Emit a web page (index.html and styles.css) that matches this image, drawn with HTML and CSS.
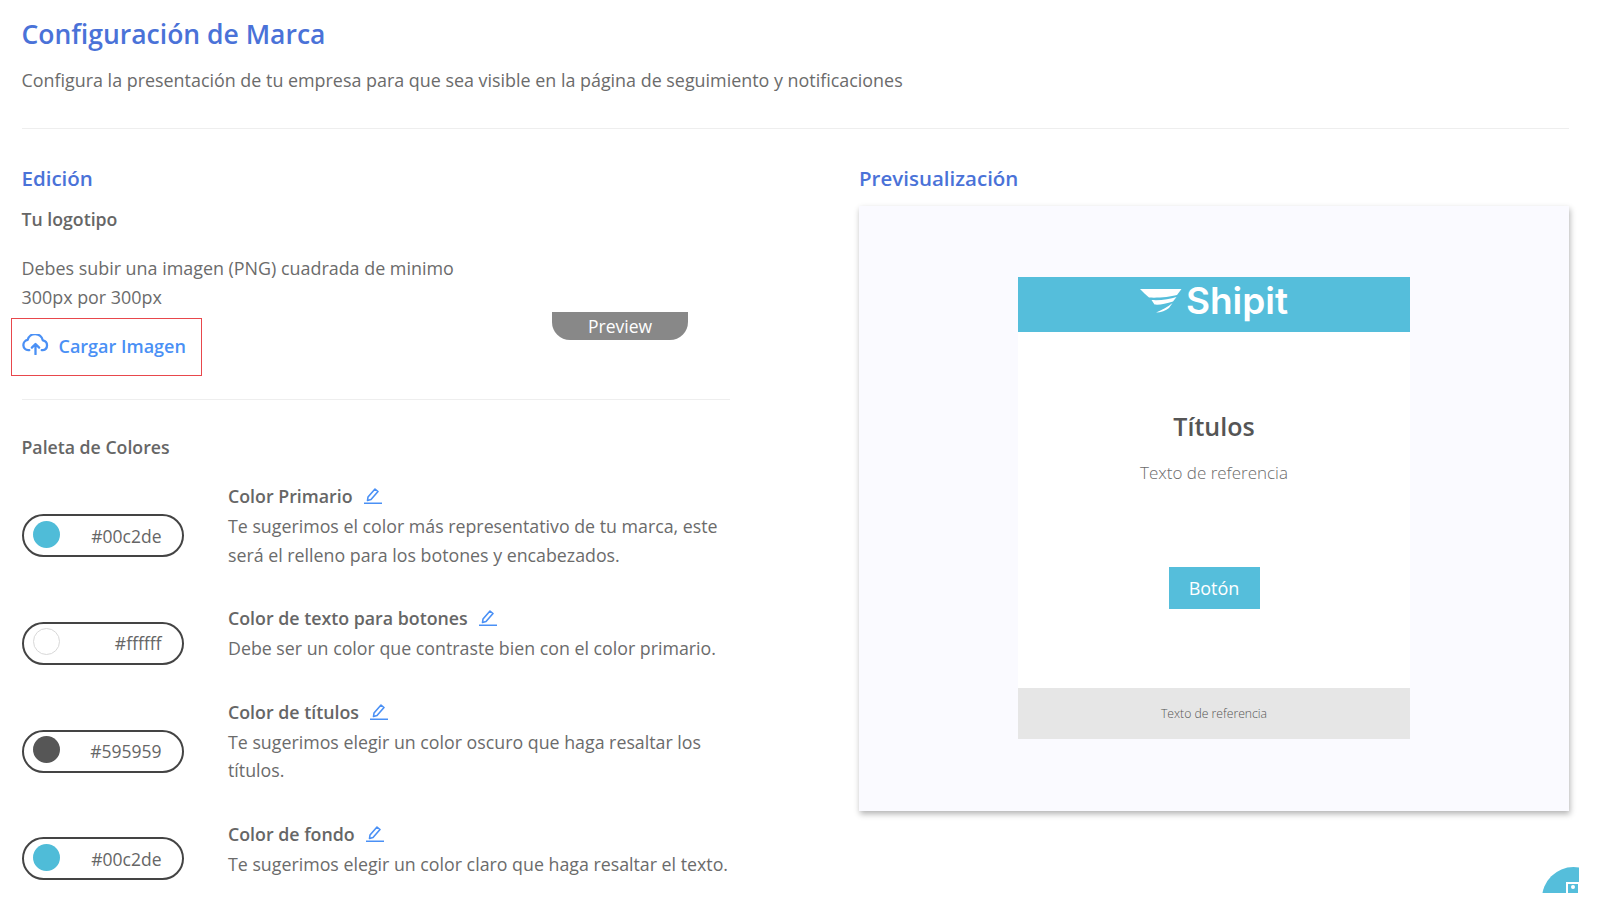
FILE: index.html
```html
<!DOCTYPE html>
<html lang="es">
<head>
<meta charset="utf-8">
<title>Configuración de Marca</title>
<link rel="stylesheet" href="styles.css">
</head>
<body>
<main class="page">
  <header class="page-head">
    <h1 class="page-title">Configuración de Marca</h1>
    <p class="page-sub">Configura la presentación de tu empresa para que sea visible en la página de seguimiento y notificaciones</p>
  </header>
  <div class="columns">
    <section class="edit">
      <h2 class="section-title">Edición</h2>
      <h3 class="sub-title logo-title">Tu logotipo</h3>
      <p class="logo-text">Debes subir una imagen (PNG) cuadrada de minimo<br>300px por 300px</p>
      <div class="upload-row">
        <div class="upload-box">
          <svg class="cloud" viewBox="0 0 26 20" fill="none" stroke="currentColor" stroke-width="2.2" stroke-linecap="round" stroke-linejoin="round"><path d="M7 15.500H6a5 5 0 0 1-.6-9.900A7.500 7.500 0 0 1 20 6a4.800 4.800 0 0 1 0 9.500h-1"/><path d="M13 19.500V10M9.500 13 13 9.500l3.500 3.500"/></svg>
          <span>Cargar Imagen</span>
        </div>
        <div class="preview-tab">Preview</div>
      </div>
      <div class="palette">
        <h3 class="sub-title palette-title">Paleta de Colores</h3>
        <div class="color-row">
          <div class="pill"><span class="dot dot-blue"></span><span>#00c2de</span></div>
          <div class="color-info">
            <h4 class="color-name">Color Primario<svg class="pencil" viewBox="0 0 18 16" fill="none" stroke="currentColor" stroke-width="1.600" stroke-linejoin="round"><path d="M3.500 12.500 4 9l7-8 3 2.500-7 8z"/><path d="M0 15.300h18"/></svg></h4>
            <p class="color-desc">Te sugerimos el color más representativo de tu marca, este será el relleno para los botones y encabezados.</p>
          </div>
        </div>
        <div class="color-row">
          <div class="pill"><span class="dot dot-white"></span><span>#ffffff</span></div>
          <div class="color-info">
            <h4 class="color-name">Color de texto para botones<svg class="pencil" viewBox="0 0 18 16" fill="none" stroke="currentColor" stroke-width="1.600" stroke-linejoin="round"><path d="M3.500 12.500 4 9l7-8 3 2.500-7 8z"/><path d="M0 15.300h18"/></svg></h4>
            <p class="color-desc">Debe ser un color que contraste bien con el color primario.</p>
          </div>
        </div>
        <div class="color-row">
          <div class="pill"><span class="dot dot-dark"></span><span>#595959</span></div>
          <div class="color-info">
            <h4 class="color-name">Color de títulos<svg class="pencil" viewBox="0 0 18 16" fill="none" stroke="currentColor" stroke-width="1.600" stroke-linejoin="round"><path d="M3.500 12.500 4 9l7-8 3 2.500-7 8z"/><path d="M0 15.300h18"/></svg></h4>
            <p class="color-desc">Te sugerimos elegir un color oscuro que haga resaltar los títulos.</p>
          </div>
        </div>
        <div class="color-row">
          <div class="pill"><span class="dot dot-blue"></span><span>#00c2de</span></div>
          <div class="color-info">
            <h4 class="color-name">Color de fondo<svg class="pencil" viewBox="0 0 18 16" fill="none" stroke="currentColor" stroke-width="1.600" stroke-linejoin="round"><path d="M3.500 12.500 4 9l7-8 3 2.500-7 8z"/><path d="M0 15.300h18"/></svg></h4>
            <p class="color-desc">Te sugerimos elegir un color claro que haga resaltar el texto.</p>
          </div>
        </div>
      </div>
    </section>
    <section class="preview">
      <h2 class="section-title preview-heading">Previsualización</h2>
      <div class="preview-card">
        <div class="mail">
          <div class="mail-head">
            <svg class="wing" viewBox="0 0 42 25" fill="#fff"><path d="M0 0H41.500L37 6C30 8 18 9 9 8.500C6 6 3 3 0 0Z"/><path d="M11.500 11C20 11.500 30 10.500 36.500 8L33 12.500C26 15 19 16 14.500 15.500Z"/><path d="M16 23.500C22 21 28 18 32.500 14L29 19C26 21.500 21 23.500 16 23.500Z"/></svg>
            <span class="brand">Shipit</span>
          </div>
          <div class="mail-body">
            <div class="mail-title">Títulos</div>
            <div class="mail-text">Texto de referencia</div>
            <div class="mail-button">Botón</div>
          </div>
          <div class="mail-foot">Texto de referencia</div>
        </div>
      </div>
    </section>
  </div>
</main>
<div class="chat-clip">
  <div class="chat-bubble"><span class="chat-icon"><span class="chat-dot"></span></span></div>
</div>
</body>
</html>
```
FILE: styles.css
```css
* { box-sizing: border-box; }
html, body { margin: 0; height: 100%; background: #fff; overflow: hidden; }
body { font-family: "Open Sans", "Noto Sans", "Liberation Sans", sans-serif; color: #666; }
h1, h2, h3, h4, p { margin: 0; }

.page { padding: 16px 31px 0 21.500px; }
.page-head { height: 113px; border-bottom: 1px solid #eeeeee; }
.page-title { font-size: 26.500px; line-height: 36px; font-weight: 600; color: #4a72d8; }
.page-sub { margin-top: 14px; font-size: 17.900px; line-height: 28px; color: #6b6b6b; }

.columns { display: grid; grid-template-columns: 708.500px 710px; column-gap: 129px; padding-top: 35px; }

.section-title { font-size: 20.500px; line-height: 28px; font-weight: 600; color: #4a72d8; }
.sub-title { font-size: 17.700px; line-height: 28px; font-weight: 600; color: #666; }
.logo-title { margin-top: 13px; }
.logo-text { margin-top: 21px; font-size: 17.900px; line-height: 29px; color: #6b6b6b; }

.upload-row { display: flex; align-items: flex-start; height: 89px; border-bottom: 1px solid #eeeeee; margin-top: -1px; }
.upload-box { display: flex; align-items: center; gap: 10px; width: 191px; height: 58px; margin: 7px 0 0 -11px; padding: 0 0 2px 10px; border: 1.500px solid #e8474c; color: #4a90f5; font-size: 18px; font-weight: 600; }
.cloud { width: 27px; height: 21px; flex: none; margin-top: -3px; }
.preview-tab { width: 136px; height: 28px; margin: 1px 0 0 350.500px; background: #888; color: #fff; font-size: 17.500px; line-height: 28px; text-align: center; border-radius: 0 0 18px 18px; }

.palette { padding-top: 33px; }
.palette-title { margin-bottom: 21px; }
.color-row { display: grid; grid-template-columns: 162px 1fr; column-gap: 44.500px; align-items: center; margin-bottom: 35px; }
.pill { display: flex; align-items: center; justify-content: space-between; height: 43px; margin: 10px 0 -10px; padding: 0 20px 0 9px; border: 2px solid #444; border-radius: 22px; font-size: 17.500px; color: #666; }
.dot { width: 27px; height: 27px; border-radius: 50%; margin-top: -3px; }
.dot-blue { background: #4fbcd8; }
.dot-white { background: #fff; border: 1.500px solid #d8d8d8; }
.dot-dark { background: #565656; }
.color-name { display: flex; align-items: center; gap: 11px; font-size: 17.800px; line-height: 28px; font-weight: 600; color: #666; margin-bottom: 2px; }
.pencil { width: 18px; height: 16px; color: #4a90f5; flex: none; }
.color-desc { font-size: 17.800px; line-height: 28.500px; color: #6b6b6b; }

.preview-card { margin-top: 14px; padding: 71px 159px 72px; background: #fafaff; box-shadow: 1px 3px 6px rgba(0, 0, 0, 0.3); }
.mail { background: #fff; }
.mail-head { display: flex; align-items: center; justify-content: center; gap: 4px; height: 55px; padding-bottom: 7px; background: #55bedb; }
.wing { width: 42px; height: 25px; flex: none; }
.brand { font-family: "Inter", sans-serif; font-size: 37px; line-height: 40px; font-weight: 600; color: #fff; }
.mail-body { display: flex; flex-direction: column; align-items: center; height: 356px; padding-top: 75px; }
.mail-title { font-size: 25px; line-height: 38px; font-weight: 600; color: #555; }
.mail-text { margin-top: 16px; font-size: 17px; line-height: 24px; font-weight: 300; color: #6b6b6b; }
.mail-button { display: flex; align-items: center; justify-content: center; width: 91px; height: 42px; margin-top: 82px; background: #55bedb; color: #fff; font-size: 18px; }
.mail-foot { height: 51px; background: #e6e6e6; font-size: 12.200px; line-height: 51px; font-weight: 300; color: #555; text-align: center; }

.chat-clip { position: fixed; left: 1500px; top: 840px; width: 79px; height: 53px; overflow: hidden; }
.chat-bubble { position: absolute; left: 42px; top: 27px; width: 63px; height: 63px; border-radius: 50%; background: #55bedb; }
.chat-icon { position: absolute; left: 24px; top: 15px; width: 14px; height: 14px; border: 2px solid #fff; border-bottom: 0; }
.chat-dot { position: absolute; left: 3px; top: 1px; width: 4px; height: 4px; border-radius: 50%; background: #fff; }
```
